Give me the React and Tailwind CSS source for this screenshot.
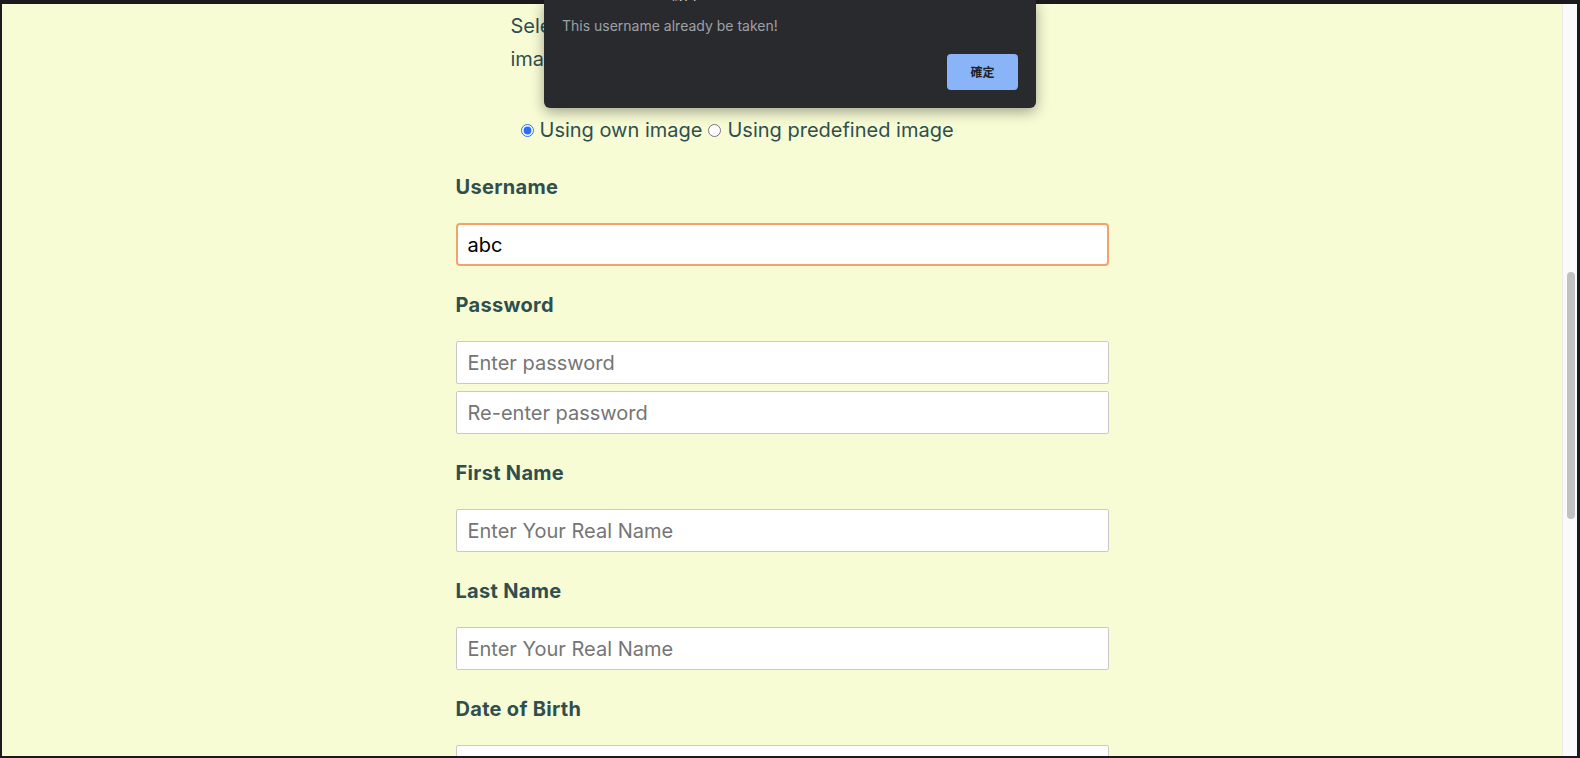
import React from "react";

function Field({ label, children, first }) {
  return (
    <div className={first ? "" : "mt-[27px]"}>
      <div className="text-[20px] leading-[24px] font-bold tracking-[0.3px] text-[#2f4f4f] mb-[24px]">{label}</div>
      {children}
    </div>
  );
}

function TextInput({ placeholder, value, focused }) {
  if (focused) {
    return (
      <input
        type="text"
        defaultValue={value}
        className="block w-full h-[43px] bg-white border-2 border-[#f3a26e] rounded-[4px] pl-[10px] text-[20px] text-black outline-none"
      />
    );
  }
  return (
    <input
      type="text"
      placeholder={placeholder}
      className="block w-full h-[43px] bg-white border border-[#c9c9c9] rounded-[2px] pl-[11px] text-[20px] text-black placeholder:text-[#757575] outline-none"
    />
  );
}

function App() {
  return (
    <div
      className="relative w-[1580px] h-[758px] overflow-hidden bg-[#1b1b1d] pt-[4px] pl-[2px] pr-[3px] pb-[2px]"
      style={{ fontFamily: "Inter, 'Noto Sans', sans-serif" }}
    >
      <div className="flex h-full">
        <main className="flex-1 bg-[#f8fcd5] overflow-hidden pt-[6px]">
          <div className="w-[653px] mx-auto">
            <p className="pl-[55px] text-[20px] leading-[33px] text-[#2f4f4f]">
              Select a profile picture from your own
              <br />
              image or from our predefined images
            </p>
            <div className="mt-[42px] pl-[65px] flex items-center h-[24px] text-[20px] text-[#2f4f4f]">
              <input type="radio" name="img" defaultChecked className="w-[13px] h-[13px] m-0 accent-[#2b6ef5]" />
              <span className="ml-[6px]">Using own image</span>
              <input type="radio" name="img" className="w-[13px] h-[13px] m-0 ml-[6px]" />
              <span className="ml-[6px]">Using predefined image</span>
            </div>
            <div className="mt-[33px]">
              <Field label="Username" first>
                <TextInput value="abc" focused />
              </Field>
              <Field label="Password">
                <TextInput placeholder="Enter password" />
                <div className="h-[7px]" />
                <TextInput placeholder="Re-enter password" />
              </Field>
              <Field label="First Name">
                <TextInput placeholder="Enter Your Real Name" />
              </Field>
              <Field label="Last Name">
                <TextInput placeholder="Enter Your Real Name" />
              </Field>
              <Field label="Date of Birth">
                <TextInput placeholder="" />
              </Field>
            </div>
          </div>
        </main>
        <div className="relative w-[15px] bg-[#fafafa] border-l border-[#ebebeb]">
          <div className="absolute left-[4px] top-[268px] w-[8px] h-[247px] rounded-full bg-[#c1c1c1]" />
        </div>
      </div>

      {/* alert dialog */}
      <div className="absolute left-[544px] top-0 w-[492px] h-[108px] bg-[#292a2d] rounded-b-[6px] shadow-[0_4px_14px_rgba(0,0,0,0.35)] overflow-hidden">
        <div
          className="absolute left-[18px] top-[-15px] text-[15px] leading-[18px] text-white"
          style={{ fontFamily: "Inter, 'Noto Sans CJK TC', sans-serif" }}
        >
          localhost:3000 顯示
        </div>
        <div className="absolute left-[18px] top-[17px] text-[14px] leading-[18px] text-[#9ea1a6]">
          This username already be taken!
        </div>
        <button
          className="absolute right-[18px] bottom-[18px] w-[71px] h-[36px] rounded-[4px] bg-[#8ab4f8] text-[12px] font-semibold text-[#202124]"
          style={{ fontFamily: "'Noto Sans CJK TC', sans-serif" }}
        >
          確定
        </button>
      </div>
    </div>
  );
}

export default App;
